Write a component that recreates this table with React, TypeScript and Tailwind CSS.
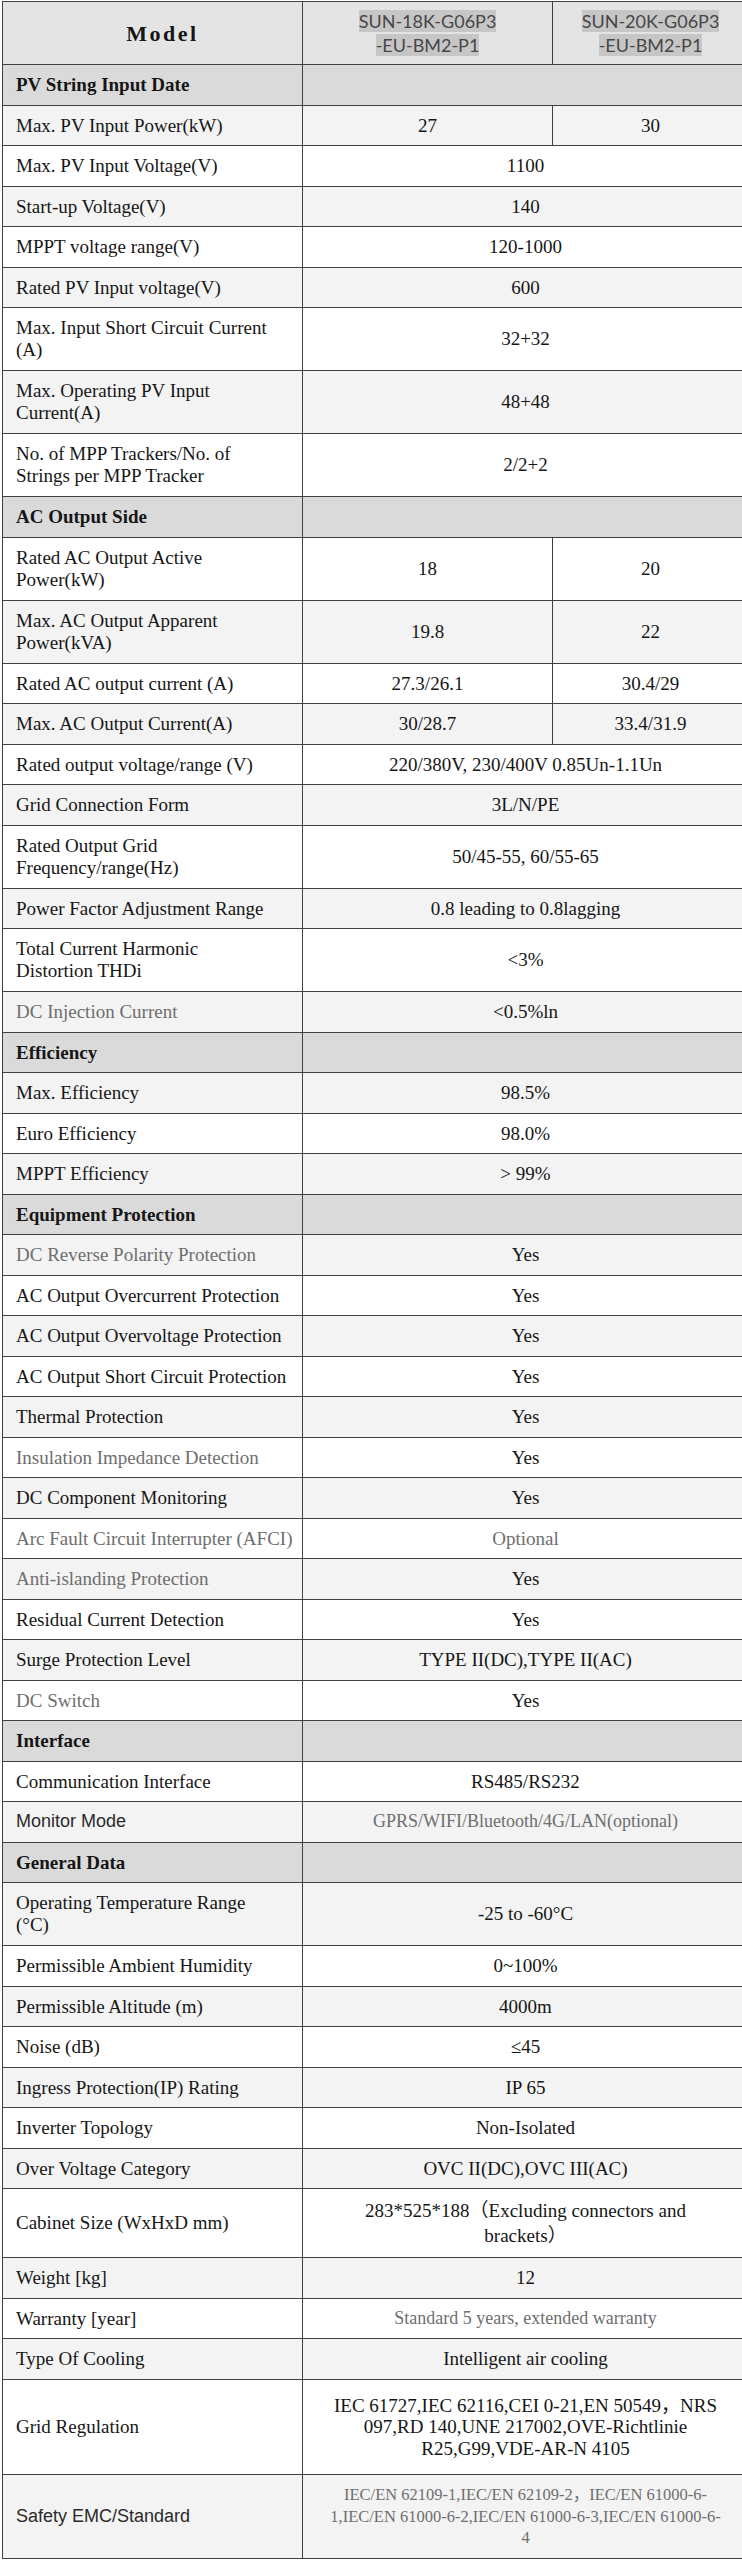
type Spec = {
  label: string;
  value: string | [string, string];
  labelGray?: boolean;
  valueGray?: boolean;
  labelClass?: string;
  valueClass?: string;
};
type Row = { section: string } | Spec;

const ROWS: Row[] = [
  { section: "PV String Input Date" },
  { label: "Max. PV Input Power(kW)", value: ["27", "30"] },
  { label: "Max. PV Input Voltage(V)", value: "1100" },
  { label: "Start-up Voltage(V)", value: "140" },
  { label: "MPPT voltage range(V)", value: "120-1000" },
  { label: "Rated PV Input voltage(V)", value: "600" },
  { label: "Max. Input Short Circuit Current\n(A)", value: "32+32" },
  { label: "Max. Operating PV Input\nCurrent(A)", value: "48+48" },
  { label: "No. of MPP Trackers/No. of\nStrings per MPP Tracker", value: "2/2+2" },
  { section: "AC Output Side" },
  { label: "Rated AC Output Active\nPower(kW)", value: ["18", "20"] },
  { label: "Max. AC Output Apparent\nPower(kVA)", value: ["19.8", "22"] },
  { label: "Rated AC output current (A)", value: ["27.3/26.1", "30.4/29"] },
  { label: "Max. AC Output Current(A)", value: ["30/28.7", "33.4/31.9"] },
  { label: "Rated output voltage/range (V)", value: "220/380V, 230/400V 0.85Un-1.1Un" },
  { label: "Grid Connection Form", value: "3L/N/PE" },
  { label: "Rated Output Grid\nFrequency/range(Hz)", value: "50/45-55, 60/55-65" },
  { label: "Power Factor Adjustment Range", value: "0.8 leading to 0.8lagging" },
  { label: "Total Current Harmonic\nDistortion THDi", value: "<3%" },
  { label: "DC Injection Current", value: "<0.5%ln", labelGray: true },
  { section: "Efficiency" },
  { label: "Max. Efficiency", value: "98.5%" },
  { label: "Euro Efficiency", value: "98.0%" },
  { label: "MPPT Efficiency", value: "> 99%" },
  { section: "Equipment Protection" },
  { label: "DC Reverse Polarity Protection", value: "Yes", labelGray: true },
  { label: "AC Output Overcurrent Protection", value: "Yes" },
  { label: "AC Output Overvoltage Protection", value: "Yes" },
  { label: "AC Output Short Circuit Protection", value: "Yes" },
  { label: "Thermal Protection", value: "Yes" },
  { label: "Insulation Impedance Detection", value: "Yes", labelGray: true },
  { label: "DC Component Monitoring", value: "Yes" },
  { label: "Arc Fault Circuit Interrupter (AFCI)", value: "Optional", labelGray: true, valueGray: true },
  { label: "Anti-islanding Protection", value: "Yes", labelGray: true },
  { label: "Residual Current Detection", value: "Yes" },
  { label: "Surge Protection Level", value: "TYPE II(DC),TYPE II(AC)" },
  { label: "DC Switch", value: "Yes", labelGray: true },
  { section: "Interface" },
  { label: "Communication Interface", value: "RS485/RS232" },
  {
    label: "Monitor Mode",
    value: "GPRS/WIFI/Bluetooth/4G/LAN(optional)",
    valueGray: true,
    labelClass: "font-['Liberation_Sans',sans-serif] text-[18px] text-[#2a2a2a]",
    valueClass: "text-[18px]",
  },
  { section: "General Data" },
  { label: "Operating Temperature Range\n(°C)", value: "-25 to -60°C" },
  { label: "Permissible Ambient Humidity", value: "0~100%" },
  { label: "Permissible Altitude (m)", value: "4000m" },
  { label: "Noise (dB)", value: "≤45" },
  { label: "Ingress Protection(IP) Rating", value: "IP 65" },
  { label: "Inverter Topology", value: "Non-Isolated" },
  { label: "Over Voltage Category", value: "OVC II(DC),OVC III(AC)" },
  {
    label: "Cabinet Size (WxHxD mm)",
    value: "283*525*188（Excluding connectors and\nbrackets）",
    valueClass: "leading-[25px]",
  },
  { label: "Weight [kg]", value: "12" },
  { label: "Warranty [year]", value: "Standard 5 years, extended warranty", valueGray: true, valueClass: "text-[18px]" },
  { label: "Type Of Cooling", value: "Intelligent air cooling" },
  {
    label: "Grid Regulation",
    value: "IEC 61727,IEC 62116,CEI 0-21,EN 50549，NRS\n097,RD 140,UNE 217002,OVE-Richtlinie\nR25,G99,VDE-AR-N 4105",
    valueClass: "py-[15px]",
  },
  {
    label: "Safety EMC/Standard",
    value: "IEC/EN 62109-1,IEC/EN 62109-2，IEC/EN 61000-6-\n1,IEC/EN 61000-6-2,IEC/EN 61000-6-3,IEC/EN 61000-6-\n4",
    valueGray: true,
    labelClass: "font-['Liberation_Sans',sans-serif] text-[18px] text-[#2a2a2a]",
    valueClass: "py-[4px] text-[16.5px] leading-[20.5px]",
  },
];

const cell = "border border-[#404040] align-middle";

function ModelCell({ line1, line2 }: { line1: string; line2: string }) {
  return (
    <td className={`${cell} bg-[#e4e4e4] text-center font-['Lato',sans-serif] text-[18px] leading-[24px] text-[#474747]`}>
      <span className="bg-[#c6c6c6]">{line1}</span>
      <br />
      <span className="bg-[#c6c6c6]">{line2}</span>
    </td>
  );
}

export default function App() {
  return (
    <div className="w-[742px] overflow-hidden bg-white pt-px font-['Liberation_Serif','Noto_Sans_CJK_SC',serif] text-[19px] text-[#161616]">
      <table className="ml-[2px] w-[746px] table-fixed border-collapse">
        <colgroup>
          <col className="w-[300px]" />
          <col className="w-[250px]" />
          <col className="w-[196px]" />
        </colgroup>
        <tbody>
          <tr className="h-[63px]">
            <td className={`${cell} bg-[#e4e4e4] pl-[20px] text-center text-[22px] font-bold tracking-[2.5px]`}>Model</td>
            <ModelCell line1="SUN-18K-G06P3" line2="-EU-BM2-P1" />
            <ModelCell line1="SUN-20K-G06P3" line2="-EU-BM2-P1" />
          </tr>
          {ROWS.map((row, i) => {
            if ("section" in row) {
              return (
                <tr key={row.section} className="bg-[#dadada]">
                  <td className={`${cell} py-[9px] pl-[13px] leading-[21.5px] font-bold`}>{row.section}</td>
                  <td className={cell} colSpan={2} />
                </tr>
              );
            }
            const zebra = i % 2 === 1 ? "bg-[#f3f3f3]" : "bg-white";
            const labelColor = row.labelGray ? "text-[#6e6e6e]" : "";
            const labelLeading = row.label.includes("\n") ? "leading-[22px]" : "leading-[21.5px]";
            const valueColor = row.valueGray ? "text-[#6e6e6e]" : "";
            const valueBase = `${cell} whitespace-pre px-[12px] py-[9px] text-center leading-[21.5px] ${valueColor} ${row.valueClass ?? ""}`;
            return (
              <tr key={row.label} className={zebra}>
                <td className={`${cell} whitespace-pre py-[9px] pl-[13px] pr-[8px] ${labelLeading} ${labelColor} ${row.labelClass ?? ""}`}>
                  {row.label}
                </td>
                {Array.isArray(row.value) ? (
                  <>
                    <td className={valueBase}>{row.value[0]}</td>
                    <td className={valueBase}>{row.value[1]}</td>
                  </>
                ) : (
                  <td className={valueBase} colSpan={2}>
                    {row.value}
                  </td>
                )}
              </tr>
            );
          })}
        </tbody>
      </table>
    </div>
  );
}
